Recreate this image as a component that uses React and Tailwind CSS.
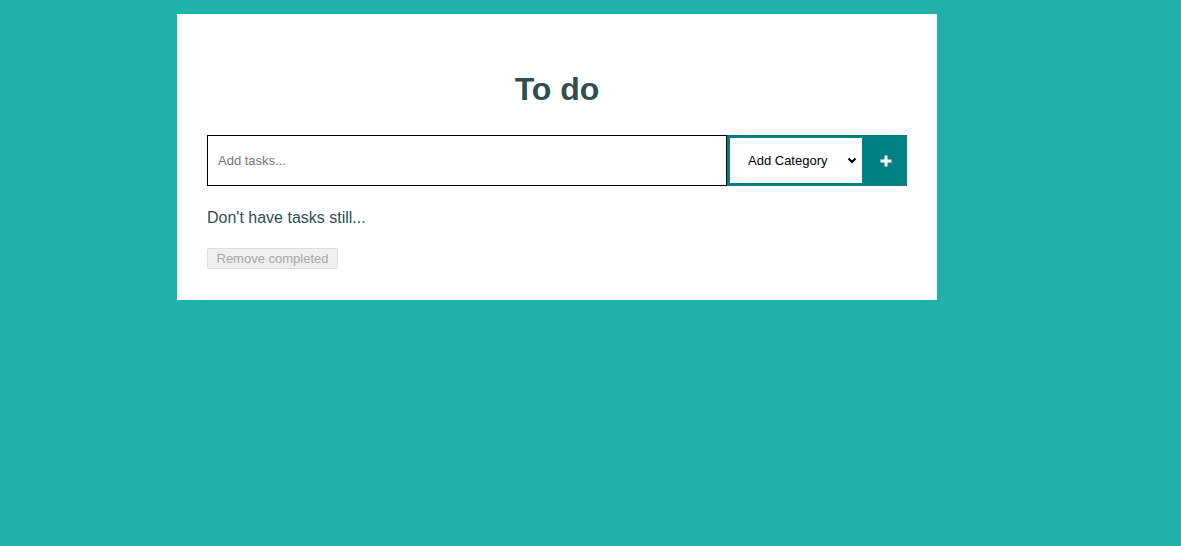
import { useState } from 'react'

export default function App() {
  const [task, setTask] = useState('')
  const [category, setCategory] = useState('')

  return (
    <div className="min-h-[546px] bg-[#20b2aa] pt-[14px] pl-[177px]" style={{ fontFamily: '"Liberation Sans", Arial, sans-serif' }}>
      <div className="w-[760px] bg-white px-[30px] pt-[57px] pb-[30px]">
        <h1 className="text-center text-[32px] leading-[37px] font-bold text-[#2f4f4f] mb-[27px]">To do</h1>

        <div className="flex h-[51px] w-[700px]">
          <input
            value={task}
            onChange={e => setTask(e.target.value)}
            placeholder="Add tasks..."
            className="shrink-0 w-[520px] h-full border border-black px-[10px] text-[13px] text-black placeholder:text-[#757575] outline-none"
          />
          <div className="relative shrink-0 w-[138px] h-full">
            <select
              value={category}
              onChange={e => setCategory(e.target.value)}
              className="appearance-none block w-full h-full border-[3px] border-[#008080] bg-white pl-[18px] text-[13px] text-black outline-none"
            >
              <option value="">Add Category</option>
              <option value="work">Work</option>
              <option value="home">Home</option>
            </select>
            <svg className="absolute right-[8px] top-[21px] pointer-events-none" width="10" height="10" viewBox="0 0 10 10">
              <path d="M1.5 2.5 L5 6 L8.5 2.5" fill="none" stroke="#000" strokeWidth="2" />
            </svg>
          </div>
          <button className="shrink-0 w-[42px] h-full bg-[#008080] flex items-center justify-center">
            <svg width="12" height="12" viewBox="0 0 12 12">
              <path d="M6 0.5 V11.5 M0.5 6 H11.5" stroke="#fff" strokeWidth="3" />
            </svg>
          </button>
        </div>

        <p className="mt-[23px] text-[16px] leading-[18px] text-[#2f4f4f]">Don't have tasks still...</p>

        <button
          disabled
          className="mt-[21px] h-[21px] w-[131px] border border-[#dcdcdc] bg-[#efefef] rounded-[2px] text-[13px] leading-[15px] text-[#a6a6a6]"
        >
          Remove completed
        </button>
      </div>
    </div>
  )
}
